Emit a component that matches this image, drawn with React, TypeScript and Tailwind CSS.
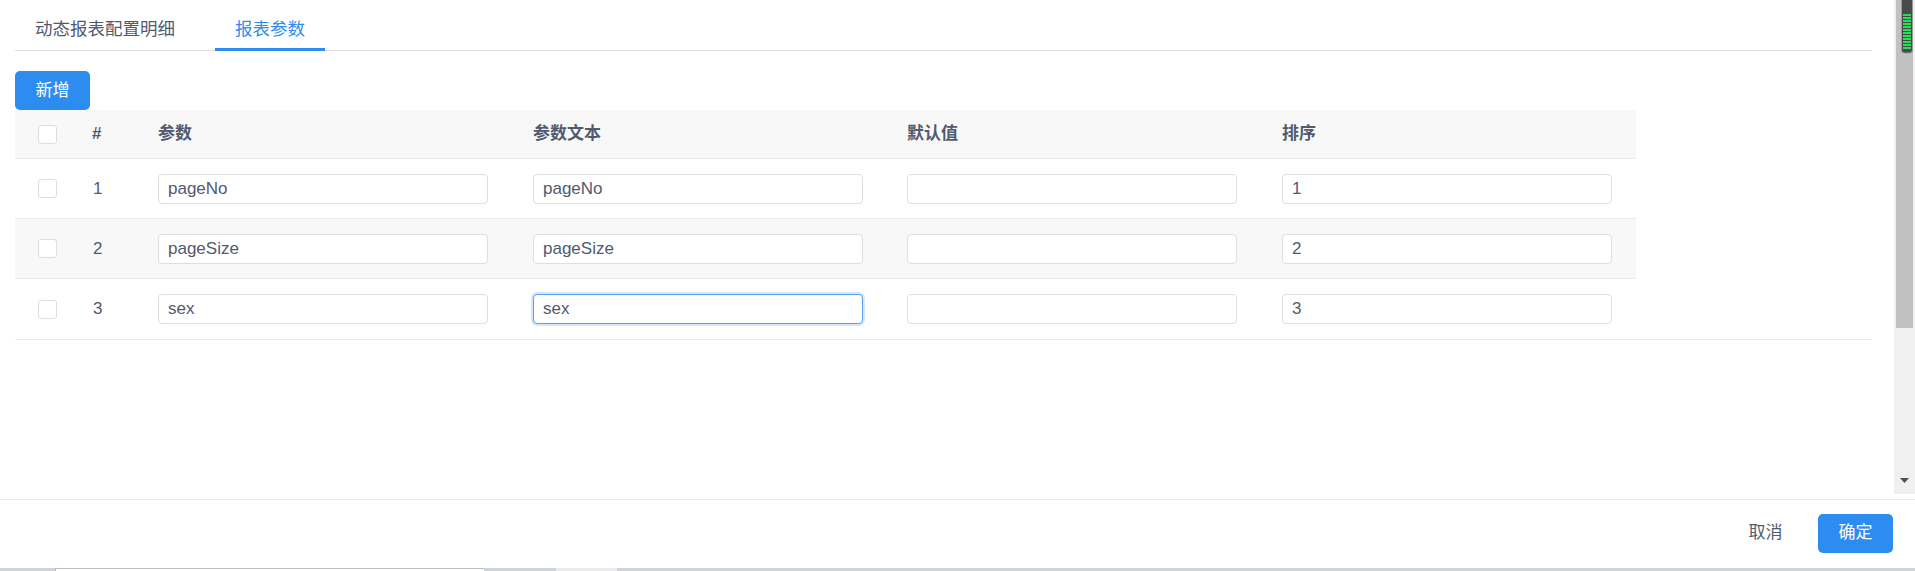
import { useState } from "react";

const rows = [
  { id: 1, name: "pageNo", text: "pageNo", def: "", order: "1" },
  { id: 2, name: "pageSize", text: "pageSize", def: "", order: "2" },
  { id: 3, name: "sex", text: "sex", def: "", order: "3" },
];

const font = "font-['Liberation_Sans','Noto_Sans_CJK_SC',sans-serif]";

function Checkbox() {
  return <span className="block w-[19px] h-[19px] rounded-[3px] border border-[#dcdee2] bg-white" />;
}

function Field({ value, focused }: { value: string; focused?: boolean }) {
  return (
    <input
      defaultValue={value}
      className={
        focused
          ? "w-[330px] h-[30px] px-[9px] rounded-[4px] border border-[#57a3f3] bg-white text-[17px] text-[#515a6e] outline-none shadow-[0_0_0_2px_rgba(45,140,240,0.2)]"
          : "w-[330px] h-[30px] px-[9px] rounded-[4px] border border-[#dcdee2] bg-white text-[17px] text-[#515a6e] outline-none"
      }
    />
  );
}

function Scrollbar() {
  return (
    <div className="w-[21px] h-[494px] ml-[1px] bg-[#f0f0f0] flex flex-col">
      <div className="relative ml-[2px] w-[17px] h-[328px] bg-[#c1c1c1]">
        {/* dark thumb grip with green meter */}
        <svg className="absolute left-[5px] top-0" width="12" height="54" viewBox="0 0 12 54">
          <rect x="0.5" y="-4" width="11" height="57" rx="3" fill="#4a4a4a" stroke="#9a9a9a" />
          {Array.from({ length: 12 }).map((_, i) => (
            <rect key={i} x="2" y={14 + i * 3} width="8" height="2" fill="#2bdc5a" />
          ))}
        </svg>
      </div>
      <div className="flex-1" />
      <div className="h-[20px] flex items-start justify-center pt-[4px]">
        <svg width="9" height="6" viewBox="0 0 9 6">
          <path d="M0 0h9L4.5 5z" fill="#505050" />
        </svg>
      </div>
    </div>
  );
}

export default function App() {
  const [tab, setTab] = useState(1);

  return (
    <div className={`w-[1915px] h-[571px] bg-white flex flex-col overflow-hidden ${font}`}>
      {/* Body */}
      <div className="flex h-[495px]">
        <div className="flex-1 pl-[15px] pr-[21px]">
          {/* Tabs */}
          <div className="flex h-[51px] border-b border-[#dcdee2]">
            {["动态报表配置明细", "报表参数"].map((label, i) => (
              <button
                key={label}
                onClick={() => setTab(i)}
                className={
                  tab === i
                    ? "mr-[20px] px-[20px] pt-[17px] pb-[8px] leading-[24px] text-[17.5px] text-[#2d8cf0] border-b-[3px] border-[#2d8cf0] -mb-px"
                    : "mr-[20px] px-[20px] pt-[17px] pb-[10px] leading-[24px] text-[17.5px] text-[#515a6e]"
                }
              >
                {label}
              </button>
            ))}
          </div>

          <button className="mt-[20px] w-[75px] h-[39px] rounded-[5px] bg-[#2d8cf0] text-white text-[17px]">
            新增
          </button>

          {/* Table */}
          <div className="border-b border-[#e8eaec]">
            <div className="w-[1621px] text-[17px] text-[#515a6e]">
              <div className="flex h-[49px] items-center bg-[#f8f8f9] border-b border-[#e8eaec] font-bold">
                <div className="w-[65px] flex justify-center">
                  <Checkbox />
                </div>
                <div className="w-[60px] pl-[12px]">#</div>
                <div className="w-[375px] px-[18px]">参数</div>
                <div className="w-[375px] px-[18px]">参数文本</div>
                <div className="w-[375px] px-[17px]">默认值</div>
                <div className="flex-1 px-[17px]">排序</div>
              </div>
              {rows.map((r, i) => (
                <div
                  key={r.id}
                  className={
                    i === 1
                      ? "flex h-[60px] items-center bg-[#f8f8f9] border-b border-[#e8eaec]"
                      : i === rows.length - 1
                        ? "flex h-[60px] items-center bg-white"
                        : "flex h-[60px] items-center bg-white border-b border-[#e8eaec]"
                  }
                >
                  <div className="w-[65px] flex justify-center">
                    <Checkbox />
                  </div>
                  <div className="w-[60px] pl-[13px]">{r.id}</div>
                  <div className="w-[375px] px-[18px]">
                    <Field value={r.name} />
                  </div>
                  <div className="w-[375px] px-[18px]">
                    <Field value={r.text} focused={i === 2} />
                  </div>
                  <div className="w-[375px] px-[17px]">
                    <Field value={r.def} />
                  </div>
                  <div className="flex-1 px-[17px]">
                    <Field value={r.order} />
                  </div>
                </div>
              ))}
            </div>
          </div>
        </div>
        <Scrollbar />
      </div>

      {/* Footer */}
      <div className="mt-[4px] h-[69px] border-t border-[#e8eaec] flex items-center justify-end gap-[15px] pr-[22px] pb-[2px]">
        <button className="w-[75px] h-[39px] text-[17px] text-[#515a6e]">取消</button>
        <button className="w-[75px] h-[39px] rounded-[5px] bg-[#2d8cf0] text-white text-[17px]">确定</button>
      </div>

      {/* edge of the page behind */}
      <div className="h-[3px] flex bg-[#cfd2d6]">
        <div className="w-[55px]" />
        <div className="w-[429px] bg-white border-l border-t border-[#b8bcc2]" />
        <div className="w-[72px]" />
        <div className="w-[61px] bg-[#e9eaec]" />
      </div>
    </div>
  );
}
